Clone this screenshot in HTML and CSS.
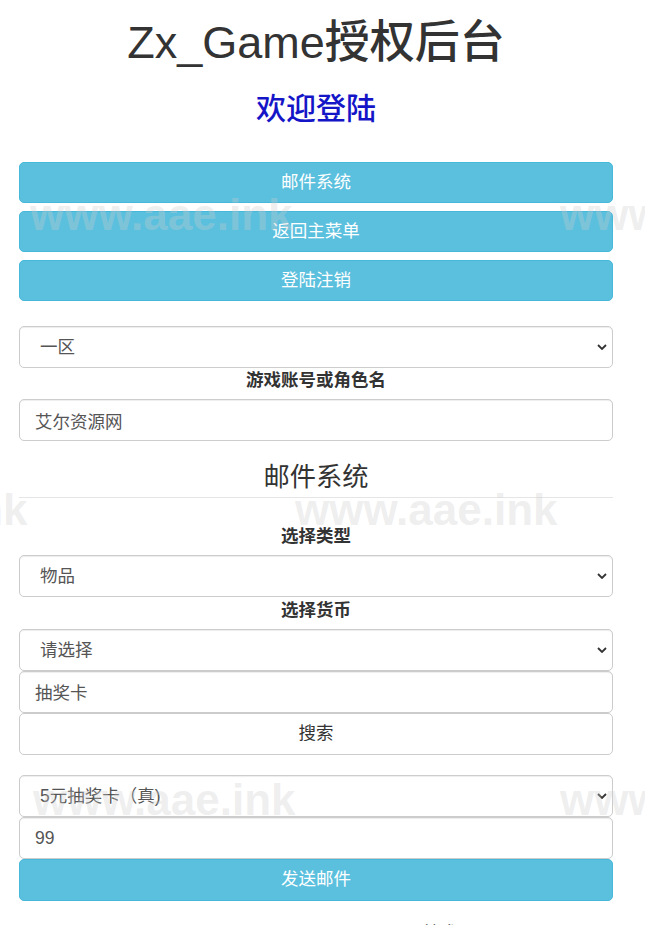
FILE: index.html
```html
<!DOCTYPE html>
<html lang="zh-CN">
<head>
<meta charset="utf-8">
<title>Zx_Game授权后台</title>
<link rel="stylesheet" href="styles.css">
</head>
<body>
<div class="page">
  <h1 class="title">Zx_Game授权后台</h1>
  <h2 class="welcome">欢迎登陆</h2>

  <div class="nav">
    <button class="btn btn-info" type="button">邮件系统</button>
    <button class="btn btn-info" type="button">返回主菜单</button>
    <button class="btn btn-info" type="button">登陆注销</button>
  </div>

  <form class="form">
    <div class="select-wrap">
      <select class="control select"><option>一区</option></select>
      <svg class="chev" viewBox="0 0 10 6" width="10" height="6"><path d="M1 1 L5 5 L9 1" fill="none" stroke="#333" stroke-width="1.8"/></svg>
    </div>
    <label class="label">游戏账号或角色名</label>
    <input class="control" type="text" value="艾尔资源网">

    <div class="legend">邮件系统</div>

    <label class="label label-gap">选择类型</label>
    <div class="select-wrap">
      <select class="control select"><option>物品</option></select>
      <svg class="chev" viewBox="0 0 10 6" width="10" height="6"><path d="M1 1 L5 5 L9 1" fill="none" stroke="#333" stroke-width="1.8"/></svg>
    </div>
    <label class="label label-gap">选择货币</label>
    <div class="select-wrap">
      <select class="control select"><option>请选择</option></select>
      <svg class="chev" viewBox="0 0 10 6" width="10" height="6"><path d="M1 1 L5 5 L9 1" fill="none" stroke="#333" stroke-width="1.8"/></svg>
    </div>
    <input class="control" type="text" value="抽奖卡">
    <button class="btn btn-default" type="button">搜索</button>

    <div class="group">
      <div class="select-wrap">
        <select class="control select"><option>5元抽奖卡（真)</option></select>
        <svg class="chev" viewBox="0 0 10 6" width="10" height="6"><path d="M1 1 L5 5 L9 1" fill="none" stroke="#333" stroke-width="1.8"/></svg>
      </div>
      <input class="control" type="text" value="99">
      <button class="btn btn-info" type="button">发送邮件</button>
    </div>
  </form>

  <p class="footer">技术</p>
</div>

<div class="wm-layer">
  <div class="wm wm-1">www.aae.ink</div>
  <div class="wm wm-2">www.aae.ink</div>
  <div class="wm wm-3">www.aae.ink</div>
  <div class="wm wm-4">www.aae.ink</div>
  <div class="wm wm-5">www.aae.ink</div>
  <div class="wm wm-6">www.aae.ink</div>
</div>
</body>
</html>
```

FILE: styles.css
```css
* {
  box-sizing: border-box;
}

html, body {
  margin: 0;
  padding: 0;
  background: #fff;
}

body {
  font-family: "Liberation Sans", "Noto Sans CJK SC", sans-serif;
  font-size: 17.5px;
  line-height: 1.42857;
  color: #333;
  overflow: hidden;
}

.page {
  width: 594px;
  margin-left: 19px;
}

.title {
  margin: 18px 0 0;
  font-size: 45px;
  font-weight: 500;
  line-height: 1.1;
  text-align: center;
  color: #333;
}

.welcome {
  margin: 24px 0 0;
  font-size: 30px;
  font-weight: 500;
  line-height: 1.1;
  text-align: center;
  color: #1515c8;
}

.nav {
  margin-top: 37px;
  display: flex;
  flex-direction: column;
  gap: 7.5px;
}

.btn {
  display: block;
  width: 100%;
  height: 41.5px;
  margin: 0;
  padding: 0 15px;
  font-family: inherit;
  font-size: 17.5px;
  line-height: 1;
  text-align: center;
  border: 1px solid transparent;
  border-radius: 5px;
}

.btn-info {
  color: #fff;
  background: #5bc0de;
  border-color: #46b8da;
}

.btn-default {
  color: #333;
  background: #fff;
  border-color: #ccc;
  height: 42.5px;
}

.form {
  margin-top: 25px;
  display: flex;
  flex-direction: column;
}

.select-wrap {
  position: relative;
}

.control {
  display: block;
  width: 100%;
  height: 42px;
  margin: 0;
  padding: 0 15px;
  font-family: inherit;
  font-size: 17.5px;
  color: #555;
  background: #fff;
  border: 1px solid #ccc;
  border-radius: 5px;
  box-shadow: inset 0 1px 1px rgba(0, 0, 0, 0.075);
  outline: none;
}

.select {
  -webkit-appearance: none;
  appearance: none;
  padding-left: 20px;
}

.chev {
  position: absolute;
  right: 6px;
  top: 50%;
  margin-top: -3px;
  pointer-events: none;
}

.label {
  display: block;
  margin: 0 0 6px;
  font-weight: bold;
  text-align: center;
  line-height: 25px;
}

.label-gap {
  margin-top: 1px;
}

.legend {
  margin: 18px 0 25px;
  font-size: 26.25px;
  line-height: 37.5px;
  text-align: center;
  color: #333;
  border-bottom: 1px solid #e5e5e5;
}

.group {
  margin-top: 20px;
  display: flex;
  flex-direction: column;
}

.footer {
  margin: 20px 0 0;
  padding-left: 404px;
  font-size: 17.5px;
  color: #333;
}

.wm-layer {
  position: absolute;
  left: 0;
  top: 0;
  width: 645px;
  height: 925px;
  overflow: hidden;
  pointer-events: none;
}

.wm {
  position: absolute;
  font-family: "Liberation Sans", sans-serif;
  font-weight: bold;
  font-size: 44px;
  line-height: 1;
  color: rgba(205, 205, 205, 0.33);
  white-space: nowrap;
}

.wm-1 { left: 30px; top: 193px; }
.wm-2 { left: 560px; top: 193px; }
.wm-3 { left: -235px; top: 488px; }
.wm-4 { left: 295px; top: 488px; }
.wm-5 { left: 33px; top: 778px; }
.wm-6 { left: 560px; top: 778px; }
```
